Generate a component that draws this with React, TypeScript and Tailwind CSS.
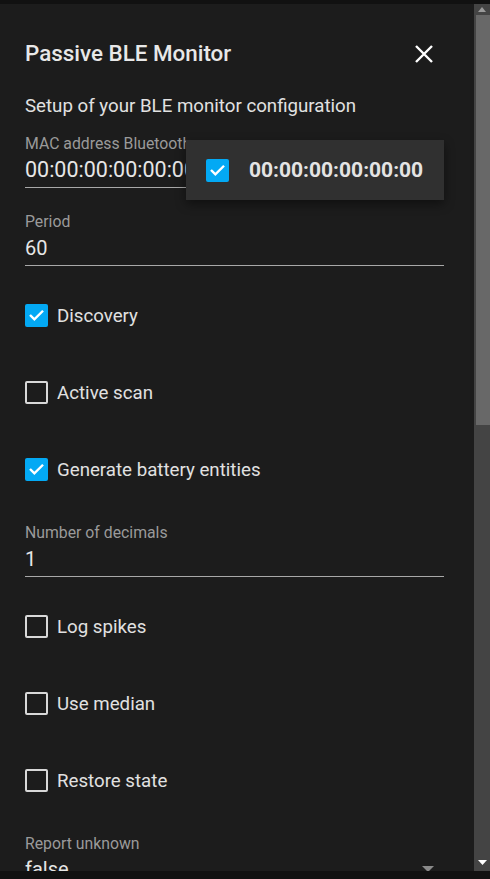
import React from "react";

function Check({ checked }: { checked: boolean }) {
  if (checked) {
    return (
      <div className="w-[23px] h-[23px] rounded-[2px] bg-[#03a9f4] flex items-center justify-center shrink-0">
        <svg width="17" height="17" viewBox="0 0 24 24" fill="none">
          <path d="M4 12.5l5 5L20 6.5" stroke="#ffffff" strokeWidth="3.4" strokeLinecap="square" strokeLinejoin="miter" />
        </svg>
      </div>
    );
  }
  return <div className="w-[23px] h-[23px] rounded-[2px] border-2 border-[#d8d8d8] shrink-0" />;
}

function CheckRow({ label, checked }: { label: string; checked: boolean }) {
  return (
    <div className="h-[77px] flex items-center gap-[9px]">
      <Check checked={checked} />
      <span className="text-[18.7px] text-[#e1e1e1] leading-[24px]">{label}</span>
    </div>
  );
}

function Field({ label, value, big }: { label: string; value: string; big?: boolean }) {
  return (
    <div className="flex flex-col">
      <div className="text-[15.8px] leading-[20px] text-[#9a9a9a] whitespace-nowrap overflow-hidden">{label}</div>
      <div
        className={
          big
            ? "mt-[3px] pb-[4px] border-b border-[#a8a8a8] text-[21.5px] leading-[26px] text-[#e6e6e6] whitespace-nowrap overflow-hidden"
            : "mt-[3px] pb-[4px] border-b border-[#a8a8a8] text-[20px] leading-[26px] text-[#e6e6e6] whitespace-nowrap overflow-hidden"
        }
      >
        {value}
      </div>
    </div>
  );
}

export default function App() {
  return (
    <div className="w-[490px] h-[879px] bg-[#111111] flex flex-col overflow-hidden" style={{ fontFamily: "Roboto, 'Noto Sans', sans-serif" }}>
      <div className="h-[4px] shrink-0 bg-[#111111]" />
      <div className="h-[867px] shrink-0 flex">
        <div className="relative w-[474px] h-full bg-[#1c1c1c] overflow-hidden pl-[25px] pr-[30px] pt-[35px]">
          <div className="flex items-center justify-between">
            <h1 className="text-[22.4px] leading-[28px] font-medium text-[#e8e8e8]">Passive BLE Monitor</h1>
            <svg width="20" height="20" viewBox="0 0 20 20" className="mr-[10px] mt-[2px]">
              <path d="M2 2L18 18M18 2L2 18" stroke="#ffffff" strokeWidth="2.4" />
            </svg>
          </div>
          <div className="mt-[27px] text-[18.7px] leading-[24px] text-[#e1e1e1]">Setup of your BLE monitor configuration</div>
          <div className="mt-[16px] w-[161px]">
            <Field label="MAC address Bluetooth adapter" value="00:00:00:00:00:00" big />
          </div>
          <div className="mt-[24px]">
            <Field label="Period" value="60" />
          </div>
          <div className="mt-[11px]">
            <CheckRow label="Discovery" checked />
            <CheckRow label="Active scan" checked={false} />
            <CheckRow label="Generate battery entities" checked />
          </div>
          <div className="mt-[15px]">
            <Field label="Number of decimals" value="1" />
          </div>
          <div className="mt-[11px]">
            <CheckRow label="Log spikes" checked={false} />
            <CheckRow label="Use median" checked={false} />
            <CheckRow label="Restore state" checked={false} />
          </div>
          <div className="mt-[15px] flex flex-col">
            <div className="text-[15.8px] leading-[20px] text-[#9a9a9a]">Report unknown</div>
            <div className="mt-[2px] flex items-center justify-between">
              <span className="text-[20px] leading-[26px] text-[#e6e6e6]">false</span>
              <svg width="12" height="6" viewBox="0 0 12 6" className="mr-[10px]">
                <path d="M0 0h12L6 6z" fill="#8a8a8a" />
              </svg>
            </div>
          </div>

          <div className="absolute left-[186px] top-[136px] w-[258px] h-[60px] bg-[#303030] shadow-[0_4px_10px_rgba(0,0,0,0.45)] flex items-center pl-[20px] gap-[20px]">
            <Check checked />
            <span className="text-[21px] font-bold text-[#e4e4e4] leading-[26px]">00:00:00:00:00:00</span>
          </div>
        </div>
        <div className="w-[16px] h-full bg-[#444444] flex flex-col">
          <div className="h-[11px] flex items-center justify-center shrink-0">
            <svg width="8" height="5" viewBox="0 0 8 5"><path d="M0 5h8L4 0z" fill="#9a9a9a" /></svg>
          </div>
          <div className="h-[410px] ml-[2px] bg-[#686868] shrink-0" />
          <div className="flex-1" />
          <div className="h-[16px] flex items-center justify-center shrink-0 mb-[1px]">
            <svg width="9" height="5" viewBox="0 0 9 5"><path d="M0 0h9L4.5 5z" fill="#ffffff" /></svg>
          </div>
        </div>
      </div>
      <div className="flex-1 bg-[#111111]" />
    </div>
  );
}
